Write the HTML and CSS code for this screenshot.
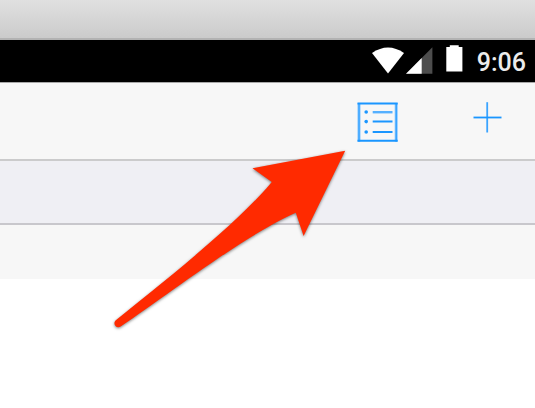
FILE: index.html
```html
<!DOCTYPE html>
<html lang="en">
<head>
<meta charset="utf-8">
<title>Navigation bar</title>
<link rel="stylesheet" href="styles.css">
</head>
<body>
<div class="window-bar"></div>
<div class="status-bar">
  <svg class="wifi" width="32" height="27" viewBox="0 0 32 27"><path d="M0 6Q16-5 32 6L16 26.5Z" fill="#fff"/></svg>
  <svg class="signal" width="27" height="27" viewBox="0 0 27 27"><path d="M0 26.7L26.4 .3V26.7Z" fill="#4d4d4d"/><path d="M0 26.7L15.7 11V26.7Z" fill="#fff"/></svg>
  <svg class="battery" width="17" height="27" viewBox="0 0 17 27"><path d="M.3 2H3.8V.2H12.7V2H16.4V26.5H.3Z" fill="#fff"/></svg>
  <span class="time">9:06</span>
</div>
<header class="toolbar">
  <svg class="list-icon" width="42" height="41" viewBox="0 0 42 41" fill="none" stroke="#1a96ff">
    <path d="M2 1V39.5M39.2 1V39.5" stroke-width="3" stroke="#83c5ff"/>
    <path d="M2 1V39.5M39.2 1V39.5" stroke-width="1"/>
    <path d="M.5 1.5H40.7M.5 38.8H40.7" stroke-width="2"/>
    <path d="M15.7 10.2H35.5" stroke-width="2.4" stroke="#55b0ff"/>
    <path d="M15.7 19.5H35.5M15.7 30H35.5" stroke-width="2"/>
    <g fill="#1a96ff" stroke="none"><circle cx="9.2" cy="10" r="1.8"/><circle cx="9.2" cy="19.6" r="1.8"/><circle cx="9.2" cy="30" r="1.8"/></g>
  </svg>
  <svg class="plus-icon" width="30" height="32" viewBox="0 0 30 32" fill="none" stroke="#1a96ff"><path d="M14.2 1.2V31.5" stroke-width="1.8" stroke="#3ba4ff"/><path d="M.5 16.5H28.5" stroke-width="1.8"/></svg>
</header>
<div class="search-band"></div>
<div class="footer-band"></div>
<svg class="arrow" width="250" height="200" viewBox="105 140 250 200"><path d="M345.2 150.8L252.5 168.2L271.8 182C240 220 180 269 115.8 320.2C112.2 323.6 116.3 329.4 121 326.3C165 297 243 236 295.8 212.8L303.6 236Z" fill="#ff2a00"/></svg>
</body>
</html>
```
FILE: styles.css
```css
body {
  position: relative;
  display: flex;
  flex-direction: column;
  height: 408px;
  margin: 0;
  overflow: hidden;
  background: #fff;
  font-family: Roboto, sans-serif;
}

.window-bar {
  box-sizing: border-box;
  height: 40px;
  border-bottom: 2px solid #b2b2b2;
  background: linear-gradient(#e0e0e0, #cbcbcb);
}

.status-bar {
  box-sizing: border-box;
  display: flex;
  align-items: flex-start;
  justify-content: flex-end;
  height: 43px;
  padding: 6px 9px 0 0;
  border-bottom: 1px solid #a8a8a8;
  background: #000;
}

.wifi {
  margin: 1px 2px 0 0;
}

.signal {
  margin: 1px 13px 0 0;
}

.battery {
  margin: -1px 14px 0 0;
}

.time {
  color: #ececec;
  font-size: 25px;
  font-weight: 500;
  line-height: 34px;
}

.toolbar {
  box-sizing: border-box;
  display: flex;
  align-items: flex-start;
  justify-content: flex-end;
  height: 76px;
  padding: 18px 32px 0 0;
  background: #f7f7f7;
}

.list-icon {
  margin: 1px 74px 0 0;
}

.search-band {
  box-sizing: border-box;
  height: 66px;
  border-top: 2px solid #cbcbcc;
  border-bottom: 2px solid #c8c7cc;
  background: #efeff4;
}

.footer-band {
  height: 54px;
  background: #f7f7f7;
}

.arrow {
  position: absolute;
  left: 105px;
  top: 140px;
  filter: drop-shadow(0 1.5px 1.5px rgba(0, 0, 0, .5));
}
```
